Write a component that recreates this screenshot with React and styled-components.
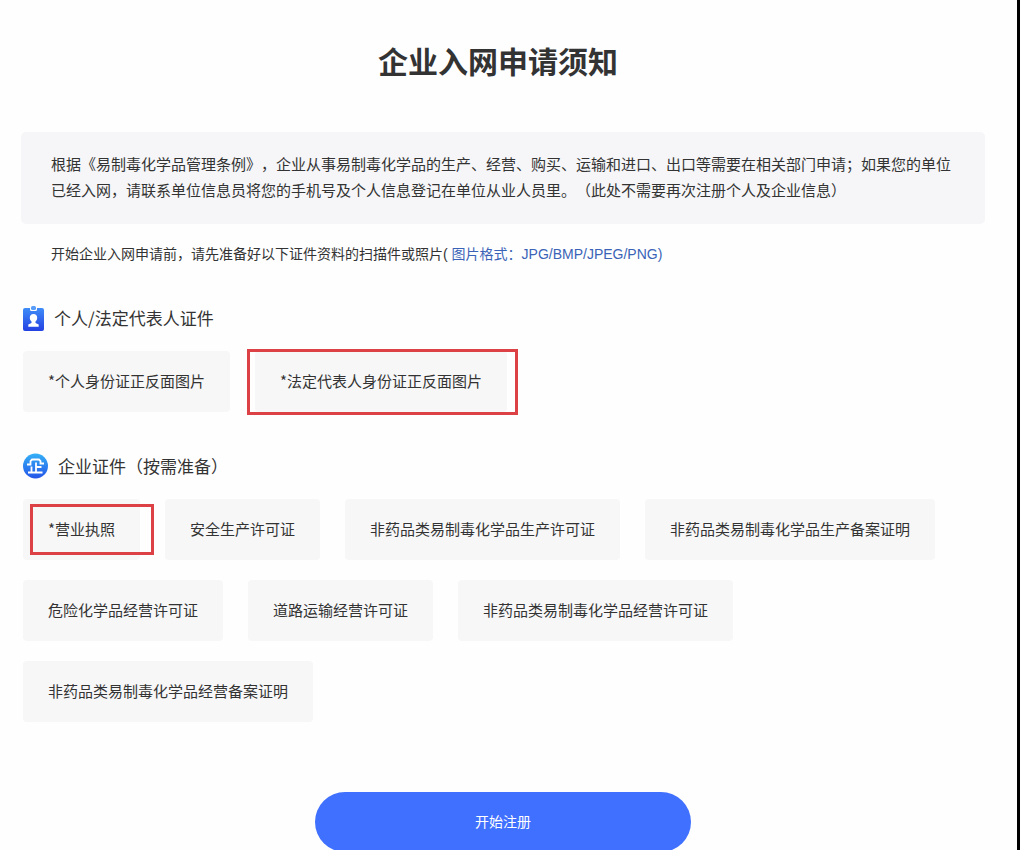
import React from 'react'
import styled, { createGlobalStyle } from 'styled-components'

const personalDocs = [
  { name: '*个人身份证正反面图片' },
  { name: '*法定代表人身份证正反面图片', marked: 'wide' },
]

const companyDocs = [
  { name: '*营业执照', marked: 'tight' },
  { name: '安全生产许可证' },
  { name: '非药品类易制毒化学品生产许可证' },
  { name: '非药品类易制毒化学品生产备案证明' },
  { name: '危险化学品经营许可证' },
  { name: '道路运输经营许可证' },
  { name: '非药品类易制毒化学品经营许可证' },
  { name: '非药品类易制毒化学品经营备案证明' },
]

function BadgeIcon() {
  return (
    <svg width="21" height="26" viewBox="0 0 21 26" aria-hidden="true">
      <defs>
        <linearGradient id="badge" x1="0" y1="0" x2="0" y2="1">
          <stop offset="0" stopColor="#3f8df8" />
          <stop offset="1" stopColor="#2440e2" />
        </linearGradient>
      </defs>
      <path d="M2 3h5v1.500a1.500 1.500 0 0 0 1.500 1.500h4A1.500 1.500 0 0 0 14 4.500V3h5a2 2 0 0 1 2 2v19a2 2 0 0 1-2 2H2a2 2 0 0 1-2-2V5a2 2 0 0 1 2-2z" fill="url(#badge)" />
      <rect x="8" y="1" width="5" height="4" rx="1.500" fill="#5a9df8" />
      <path d="M10.500 9c2.300 0 3.700 1.600 3.700 3.700 0 1.700-.7 3-1.700 3.800v1.400l3.200 1.600v2.200H5.300v-2.200l3.200-1.600v-1.400c-1-.8-1.700-2.100-1.700-3.800 0-2.100 1.400-3.700 3.700-3.700z" fill="#fff" />
    </svg>
  )
}

function CompanyIcon() {
  return (
    <svg width="25" height="26" viewBox="0 0 25 26" aria-hidden="true">
      <defs>
        <linearGradient id="company" x1="0" y1="0" x2="0" y2="1">
          <stop offset="0" stopColor="#35b1f7" />
          <stop offset="1" stopColor="#2454e8" />
        </linearGradient>
      </defs>
      <circle cx="12.500" cy="13" r="12.500" fill="url(#company)" />
      <path d="M4 11.500h3.500V8L9 6.500h7L17.500 8v2.500H21M13 9.500V19M13 14h5.500M8.500 13.500V19M5 19.500h14.500" fill="none" stroke="#fff" strokeWidth="1.800" />
    </svg>
  )
}

function DocList({ docs }) {
  return (
    <Chips>
      {docs.map((doc) => (
        <Chip key={doc.name}>
          {doc.name}
          {doc.marked && <Marker $kind={doc.marked} />}
        </Chip>
      ))}
    </Chips>
  )
}

export default function App() {
  return (
    <>
      <GlobalStyle />
      <Page>
        <Title>企业入网申请须知</Title>
        <Content>
          <Notice>
            根据《易制毒化学品管理条例》，企业从事易制毒化学品的生产、经营、购买、运输和进口、出口等需要在相关部门申请；如果您的单位已经入网，请联系单位信息员将您的手机号及个人信息登记在单位从业人员里。（此处不需要再次注册个人及企业信息）
          </Notice>
          <Hint>
            开始企业入网申请前，请先准备好以下证件资料的扫描件或照片( <Formats>图片格式：JPG/BMP/JPEG/PNG)</Formats>
          </Hint>
          <Section>
            <SectionTitle><BadgeIcon />个人/法定代表人证件</SectionTitle>
            <DocList docs={personalDocs} />
          </Section>
          <Section>
            <SectionTitle><CompanyIcon />企业证件（按需准备）</SectionTitle>
            <DocList docs={companyDocs} />
          </Section>
          <StartButton type="button">开始注册</StartButton>
        </Content>
      </Page>
    </>
  )
}

const GlobalStyle = createGlobalStyle`
  * {
    box-sizing: border-box;
  }
  body {
    margin: 0;
    background: #fefefe;
    color: #333;
    font-family: "Liberation Sans", "Noto Sans CJK SC", sans-serif;
    text-spacing-trim: space-all;
  }
`

const Page = styled.main`
  min-height: 100vh;
  border-right: 3px solid #000;
`

const Title = styled.h1`
  margin: 0;
  padding: 40px 21px 0 0;
  font-size: 30px;
  line-height: 46px;
  font-weight: 700;
  text-align: center;
`

const Content = styled.div`
  display: flex;
  flex-direction: column;
  padding: 46px 32px 0 21px;
`

const Notice = styled.p`
  margin: 0;
  padding: 20px 30px;
  border-radius: 5px;
  background: #f6f6f8;
  font-size: 15px;
  line-height: 26px;
`

const Hint = styled.p`
  margin: 20px 30px 0;
  font-size: 14px;
  line-height: 20px;
`

const Formats = styled.span`
  color: #3a63b8;
`

const Section = styled.section`
  margin-top: 40px;
  padding-left: 2px;
`

const SectionTitle = styled.h2`
  display: flex;
  align-items: center;
  gap: 10px;
  margin: 0 0 19px;
  font-family: "Noto Sans CJK SC", sans-serif;
  font-size: 17px;
  line-height: 28px;
  font-weight: 400;
`

const Chips = styled.ul`
  display: flex;
  flex-wrap: wrap;
  gap: 20px 25px;
  margin: 0;
  padding: 0;
  list-style: none;
`

const Chip = styled.li`
  position: relative;
  padding: 17px 25px 19px;
  border-radius: 4px;
  background: #f7f7f8;
  font-family: "Noto Sans CJK SC", sans-serif;
  font-size: 15px;
  line-height: 25px;
`

const Marker = styled.span`
  position: absolute;
  inset: ${(props) => (props.$kind === 'wide' ? '-2px -11px -3px -8px' : '5px -14px 5px 7px')};
  border: 3px solid #dc4245;
`

const StartButton = styled.button`
  align-self: center;
  width: 376px;
  height: 60px;
  margin-top: 70px;
  padding: 0 0 2px;
  border: 0;
  border-radius: 30px;
  background: #4070ff;
  color: #fff;
  font-family: inherit;
  font-size: 14px;
  cursor: pointer;
`
